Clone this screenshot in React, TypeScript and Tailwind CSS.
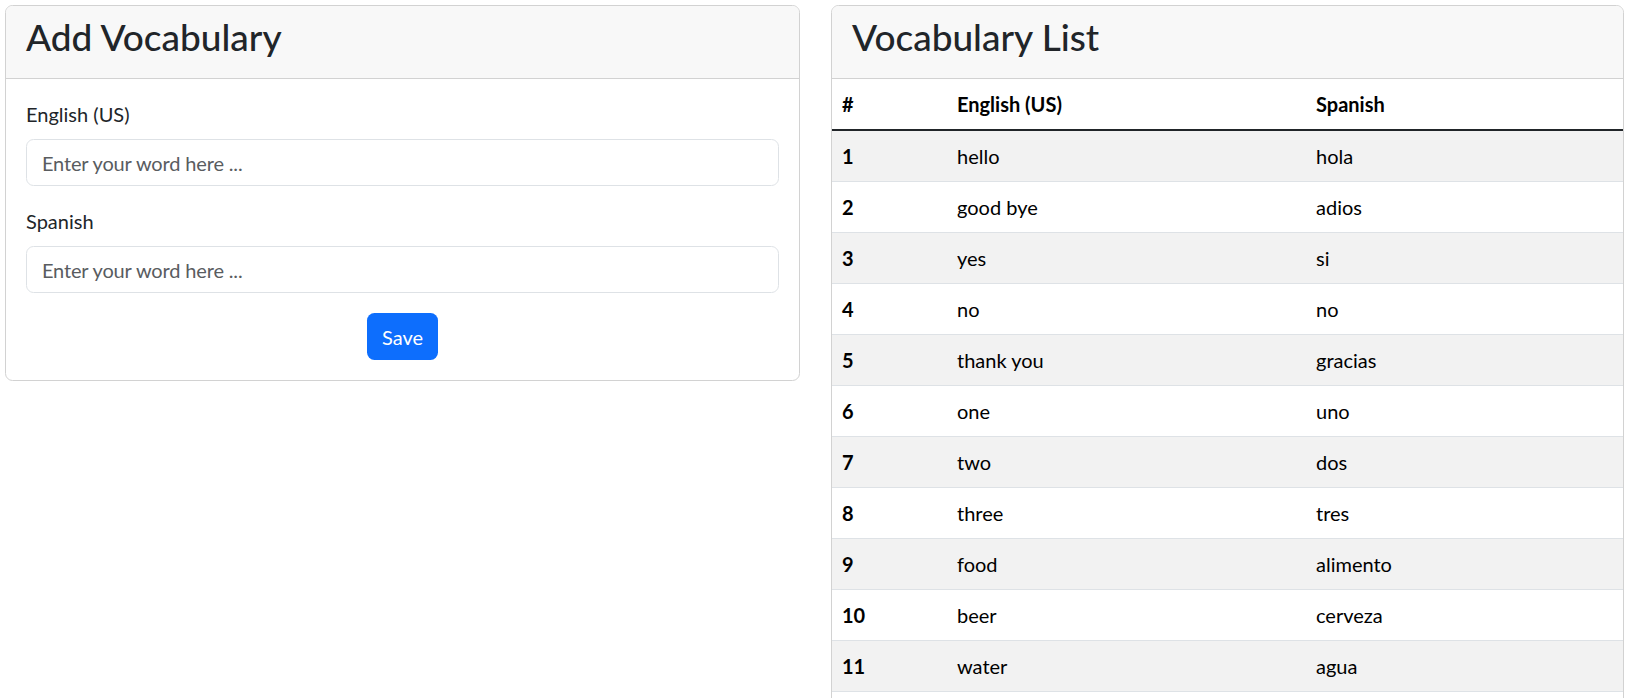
import { useState } from 'react';

type Entry = { en: string; es: string };

const words: Entry[] = [
  { en: 'hello', es: 'hola' },
  { en: 'good bye', es: 'adios' },
  { en: 'yes', es: 'si' },
  { en: 'no', es: 'no' },
  { en: 'thank you', es: 'gracias' },
  { en: 'one', es: 'uno' },
  { en: 'two', es: 'dos' },
  { en: 'three', es: 'tres' },
  { en: 'food', es: 'alimento' },
  { en: 'beer', es: 'cerveza' },
  { en: 'water', es: 'agua' },
];

function Field({ label, value, onChange }: { label: string; value: string; onChange: (v: string) => void }) {
  return (
    <div className="mb-[20px]">
      <label className="block h-[30px] leading-[30px] mb-[10px]">{label}</label>
      <input
        className="block w-full h-[47px] px-[15px] border border-[#dee2e6] rounded-[7.5px] text-[20px] tracking-[-0.15px] text-[#212529] placeholder:text-[#595c5f] outline-none"
        placeholder="Enter your word here ..."
        value={value}
        onChange={(e) => onChange(e.target.value)}
      />
    </div>
  );
}

export default function App() {
  const [english, setEnglish] = useState('');
  const [spanish, setSpanish] = useState('');

  return (
    <div
      className="h-screen overflow-hidden bg-white text-[#212529] text-[20px] pt-[5px] pl-[5px] flex items-start gap-[31px]"
      style={{ fontFamily: 'Lato, "Open Sans", sans-serif' }}
    >
      {/* Add form */}
      <section className="w-[795px] shrink-0 border border-[#d2d2d2] rounded-[7.5px] overflow-hidden">
        <header className="h-[73px] bg-[#f8f8f8] border-b border-[#d2d2d2] px-[20px] pt-[7px]">
          <h2 className="text-[37px] leading-[48px] font-medium">Add Vocabulary</h2>
        </header>
        <div className="px-[20px] pt-[20px] pb-[20px]">
          <Field label="English (US)" value={english} onChange={setEnglish} />
          <Field label="Spanish" value={spanish} onChange={setSpanish} />
          <div className="flex justify-center">
            <button className="h-[47px] px-[15px] bg-[#0d6efd] text-white rounded-[7.5px] leading-[30px]">
              Save
            </button>
          </div>
        </div>
      </section>

      {/* List - runs past the bottom of the window */}
      <section className="w-[793px] min-h-[760px] shrink-0 border border-[#d2d2d2] rounded-[7.5px] overflow-hidden">
        <header className="h-[73px] bg-[#f8f8f8] border-b border-[#d2d2d2] px-[20px] pt-[7px]">
          <h2 className="text-[37px] leading-[48px] font-medium">Vocabulary List</h2>
        </header>
        <table className="w-full border-collapse table-fixed text-black">
          <colgroup>
            <col className="w-[115px]" />
            <col className="w-[359px]" />
            <col className="w-[317px]" />
          </colgroup>
          <thead>
            <tr className="border-b-2 border-[#212529]">
              <th className="text-left font-bold px-[10px] py-[10px] leading-[30px]">#</th>
              <th className="text-left font-bold px-[10px] py-[10px] leading-[30px]">English (US)</th>
              <th className="text-left font-bold px-[10px] py-[10px] leading-[30px]">Spanish</th>
            </tr>
          </thead>
          <tbody>
            {words.map((w, i) => (
              <tr key={i} className={`border-b border-[#dee2e6] ${i % 2 === 0 ? 'bg-[#f2f2f2]' : 'bg-white'}`}>
                <th className="text-left font-bold px-[10px] py-[10px] leading-[30px]">{i + 1}</th>
                <td className="px-[10px] py-[10px] leading-[30px]">{w.en}</td>
                <td className="px-[10px] py-[10px] leading-[30px]">{w.es}</td>
              </tr>
            ))}
          </tbody>
        </table>
      </section>
    </div>
  );
}
